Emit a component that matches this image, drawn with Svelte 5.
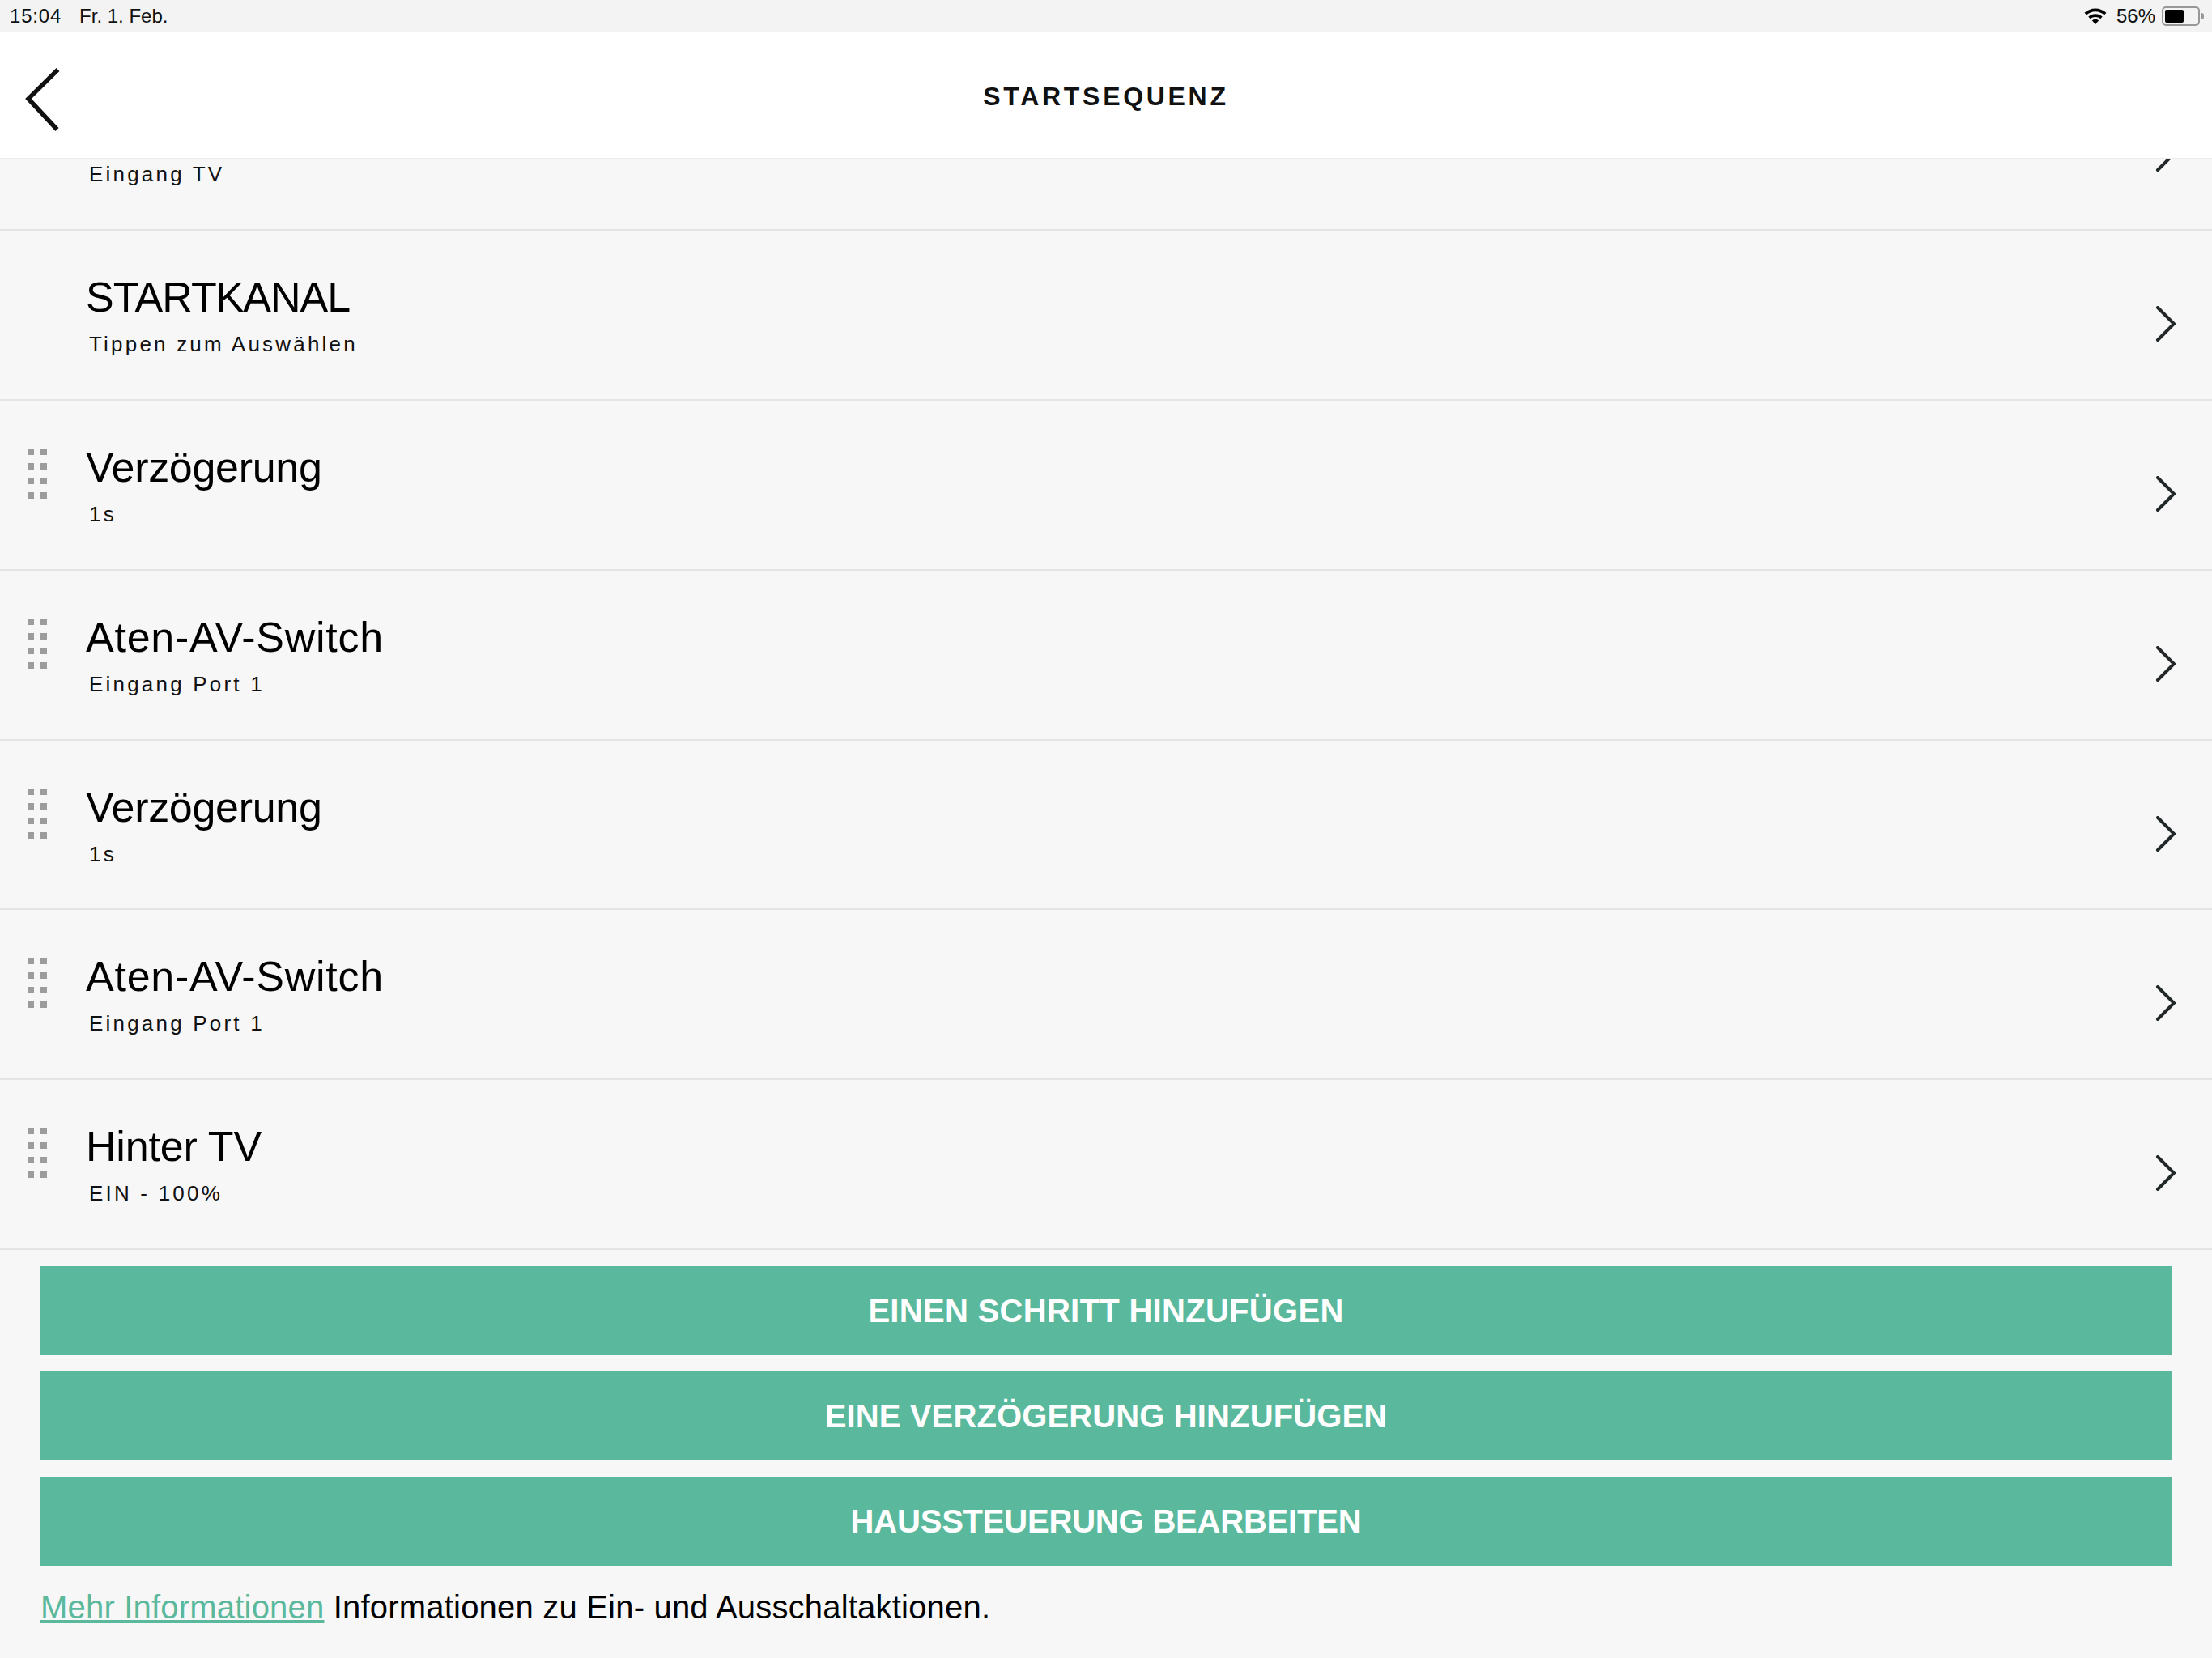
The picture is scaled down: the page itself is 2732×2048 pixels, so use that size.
<script>
  // track = letter-spacing per label, the original font runs a little wider or narrower than Liberation
  const steps = [
    { title: '', track: 0, sub: 'Eingang TV', handle: false },
    { title: 'STARTKANAL', track: -1, sub: 'Tippen zum Auswählen', handle: false },
    { title: 'Verzögerung', track: -0.3, sub: '1s', handle: true },
    { title: 'Aten-AV-Switch', track: 0.75, sub: 'Eingang Port 1', handle: true },
    { title: 'Verzögerung', track: -0.3, sub: '1s', handle: true },
    { title: 'Aten-AV-Switch', track: 0.75, sub: 'Eingang Port 1', handle: true },
    { title: 'Hinter TV', track: -0.2, sub: 'EIN - 100%', handle: true }
  ];

  const actions = [
    { label: 'EINEN SCHRITT HINZUFÜGEN', track: 0.3 },
    { label: 'EINE VERZÖGERUNG HINZUFÜGEN', track: 0.13 },
    { label: 'HAUSSTEUERUNG BEARBEITEN', track: -0.2 }
  ];
</script>

<div class="screen">
  <div class="status-bar">
    <div class="status-left">
      <span class="time">15:04</span>
      <span>Fr. 1. Feb.</span>
    </div>
    <div class="status-right">
      <svg class="wifi" width="28" height="21" viewBox="0 0 28 21" aria-hidden="true">
        <path d="M14 0.5C8.8 0.5 4.2 2.5 0.6 5.8L3 8.6C6 5.9 9.8 4.3 14 4.3S22 5.9 25 8.6L27.4 5.8C23.8 2.5 19.2 0.5 14 0.5Z" />
        <path d="M14 7.2C10.7 7.2 7.7 8.4 5.3 10.5L7.7 13.2C9.4 11.8 11.6 11 14 11S18.6 11.8 20.3 13.2L22.7 10.5C20.3 8.4 17.3 7.2 14 7.2Z" />
        <path d="M14 13.8C12.4 13.8 11 14.4 9.9 15.3L14 20.3L18.1 15.3C17 14.4 15.6 13.8 14 13.8Z" />
      </svg>
      <span>56%</span>
      <div class="battery"><div class="battery-fill"></div></div>
      <div class="battery-nub"></div>
    </div>
  </div>

  <header class="nav-bar">
    <button class="back" aria-label="Zurück">
      <svg width="44" height="80" viewBox="0 0 44 80" aria-hidden="true">
        <path d="M40.500 2L4 38L39.500 76" />
      </svg>
    </button>
    <h1>STARTSEQUENZ</h1>
  </header>

  <div class="list">
    {#each steps as step}
      <div class="row">
        <div class="handle-slot">
          {#if step.handle}
            <div class="handle">
              {#each Array(8) as _}
                <i></i>
              {/each}
            </div>
          {/if}
        </div>
        <div class="row-text">
          <div class="row-title" style="letter-spacing: {step.track}px">{step.title}</div>
          <div class="row-sub">{step.sub}</div>
        </div>
        <svg class="chevron" width="26" height="44" viewBox="0 0 26 44" aria-hidden="true">
          <path d="M3 2L23 22L3 42" />
        </svg>
      </div>
    {/each}
  </div>

  <div class="actions">
    {#each actions as action}
      <button class="action" style="letter-spacing: {action.track}px">{action.label}</button>
    {/each}
    <p class="info"><a href="#more">Mehr Informationen</a> Informationen zu Ein- und Ausschaltaktionen.</p>
  </div>
</div>

<style>
  :global(body) {
    margin: 0;
    background: #f7f7f7;
  }

  .screen {
    width: 2732px;
    height: 2048px;
    display: flex;
    flex-direction: column;
    overflow: hidden;
    font-family: "Liberation Sans", Arial, sans-serif;
    color: #000;
    background: #f7f7f7;
  }

  .status-bar {
    height: 40px;
    flex: none;
    display: flex;
    justify-content: space-between;
    align-items: center;
    padding: 0 10px 0 12px;
    background: #f3f3f3;
    font-size: 24px;
    color: #111;
  }

  .status-left {
    display: flex;
    gap: 22px;
  }

  .time {
    letter-spacing: 0.8px;
  }

  .status-right {
    display: flex;
    align-items: center;
  }

  .wifi {
    fill: #000;
    margin-right: 12px;
  }

  .battery {
    width: 47px;
    height: 24px;
    margin-left: 8px;
    box-sizing: border-box;
    border: 2px solid #979797;
    border-radius: 5px;
    padding: 2px;
  }

  .battery-fill {
    width: 23px;
    height: 100%;
    background: #000;
    border-radius: 2px;
  }

  .battery-nub {
    width: 3px;
    height: 8px;
    margin-left: 2px;
    background: #979797;
    border-radius: 0 3px 3px 0;
  }

  .nav-bar {
    height: 155px;
    flex: none;
    display: flex;
    align-items: center;
    justify-content: center;
    position: relative;
    background: #fff;
    border-bottom: 2px solid #ececec;
  }

  .nav-bar h1 {
    margin: 3px 0 0;
    font-size: 32px;
    font-weight: 700;
    letter-spacing: 3.7px;
    color: #111;
  }

  .back {
    position: absolute;
    left: 31px;
    top: 44px;
    padding: 0;
    border: 0;
    background: none;
    display: block;
  }

  .back svg {
    display: block;
    fill: none;
    stroke: #111;
    stroke-width: 5.5;
  }

  .list {
    height: 1347px;
    flex: none;
    display: flex;
    flex-direction: column;
    justify-content: flex-end;
    overflow: hidden;
  }

  .row {
    height: 209.83px;
    flex: none;
    box-sizing: border-box;
    display: flex;
    border-bottom: 2px solid #e4e4e4;
    padding-top: 59px;
  }

  .handle-slot {
    width: 106px;
    flex: none;
    padding-left: 34px;
    box-sizing: border-box;
  }

  .handle {
    display: grid;
    grid-template-columns: 8px 8px;
    grid-auto-rows: 8px;
    gap: 10px 8px;
  }

  .handle i {
    background: #9c9c9c;
  }

  .row-text {
    flex: 1;
    margin-top: -7px;
  }

  .row-title {
    min-height: 60px;
    font-size: 52px;
    line-height: 60px;
  }

  .row-sub {
    margin: 13px 0 0 4px;
    font-size: 26px;
    line-height: 30px;
    letter-spacing: 3.2px;
    color: #111;
  }

  .chevron {
    flex: none;
    margin: 34px 44px 0 0;
    fill: none;
    stroke: #22282a;
    stroke-width: 4;
    stroke-linecap: round;
  }

  .actions {
    padding: 20px 50px 0;
    display: flex;
    flex-direction: column;
    gap: 20px;
  }

  .action {
    height: 110px;
    border: 0;
    padding: 0;
    background: #5ab99d;
    color: #fff;
    font-family: inherit;
    font-size: 40px;
    font-weight: 700;
  }

  .info {
    margin: 8px 0 0;
    font-size: 40px;
    line-height: 46px;
    letter-spacing: 0.2px;
  }

  .info a {
    color: #5ab99d;
  }
</style>
